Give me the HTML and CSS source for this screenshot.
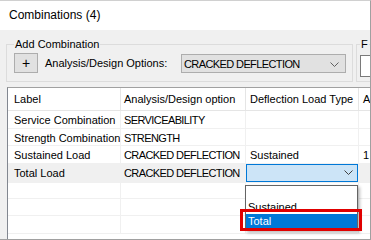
FILE: index.html
```html
<!DOCTYPE html>
<html>
<head>
<meta charset="utf-8">
<link rel="stylesheet" href="styles.css">
</head>
<body>
<div class="window">
  <div class="titlebar">Combinations (4)</div>
  <div class="panel">
    <div class="groups">
      <fieldset class="group group-add">
        <legend>Add Combination</legend>
        <div class="add-row">
          <button class="plus">+</button>
          <span class="opt-label">Analysis/Design Options:</span>
          <div class="combo">
            <span class="caps">CRACKED DEFLECTION</span>
            <svg class="chev" width="9" height="5" viewBox="0 0 9 5"><path d="M0.5 0.5 L4.5 4.5 L8.5 0.5" fill="none" stroke="#606060" stroke-width="1"/></svg>
          </div>
        </div>
      </fieldset>
      <fieldset class="group group-f">
        <legend>F</legend>
        <div class="textbox"></div>
      </fieldset>
    </div>
    <div class="grid">
      <div class="row head">
        <div class="cell">Label</div>
        <div class="cell">Analysis/Design option</div>
        <div class="cell">Deflection Load Type</div>
        <div class="cell">A</div>
      </div>
      <div class="row">
        <div class="cell">Service Combination</div>
        <div class="cell caps">SERVICEABILITY</div>
        <div class="cell"></div>
        <div class="cell"></div>
      </div>
      <div class="row">
        <div class="cell">Strength Combination</div>
        <div class="cell caps">STRENGTH</div>
        <div class="cell"></div>
        <div class="cell"></div>
      </div>
      <div class="row">
        <div class="cell">Sustained Load</div>
        <div class="cell caps">CRACKED DEFLECTION</div>
        <div class="cell">Sustained</div>
        <div class="cell">1</div>
      </div>
      <div class="row current">
        <div class="cell">Total Load</div>
        <div class="cell caps">CRACKED DEFLECTION</div>
        <div class="cell edit">
          <div class="cell-combo">
            <svg class="chev" width="9" height="5" viewBox="0 0 9 5"><path d="M0.5 0.5 L4.5 4.5 L8.5 0.5" fill="none" stroke="#404040" stroke-width="1"/></svg>
          </div>
          <div class="dropdown">
            <div class="item"></div>
            <div class="item">Sustained</div>
            <div class="item sel">Total</div>
          </div>
          <div class="mark"></div>
        </div>
        <div class="cell"></div>
      </div>
      <div class="row"><div class="cell"></div><div class="cell"></div><div class="cell"></div><div class="cell"></div></div>
      <div class="row"><div class="cell"></div><div class="cell"></div><div class="cell"></div><div class="cell"></div></div>
      <div class="row"><div class="cell"></div><div class="cell"></div><div class="cell"></div><div class="cell"></div></div>
    </div>
  </div>
</div>
</body>
</html>
```

FILE: styles.css
```css
html, body {
  margin: 0;
  padding: 0;
  background: #ffffff;
}
body {
  font-family: "Liberation Sans", Arial, sans-serif;
  font-size: 11px;
  color: #000;
}
.caps {
  letter-spacing: -0.6px;
}
.window {
  width: 370px;
  height: 238px;
  border-top: 1px solid #d0d0d0;
  border-right: 1px solid #a0a0a0;
  border-bottom: 1px solid #a0a0a0;
  overflow: hidden;
  display: flex;
  flex-direction: column;
  background: #f0f0f0;
}
.titlebar {
  height: 29px;
  background: #fff;
  padding-left: 9px;
  font-size: 12px;
  line-height: 29px;
  flex: none;
}
.panel {
  flex: 1;
  display: flex;
  flex-direction: column;
  min-height: 0;
}
.groups {
  display: flex;
  gap: 3px;
  padding: 7px 0 0 6px;
  flex: none;
}
.group {
  margin: 0;
  border: 1px solid #dcdcdc;
  min-width: 0;
  flex: none;
}
.group legend {
  padding: 0 1px;
  line-height: 14px;
  height: 14px;
}
.group-add {
  width: 332px;
  padding: 2px 6px 8px 7px;
}
.add-row {
  display: flex;
  align-items: flex-start;
  height: 20px;
}
.plus {
  width: 24px;
  height: 20px;
  margin: 0;
  padding: 0;
  border: 1px solid #adadad;
  background: #e1e1e1;
  font-family: "Liberation Sans", Arial, sans-serif;
  font-size: 14px;
  line-height: 16px;
  color: #000;
}
.opt-label {
  margin-left: 7px;
  line-height: 20px;
}
.combo {
  margin-left: auto;
  margin-top: 1px;
  height: 17px;
  border: 1px solid #adadad;
  background: #e1e1e1;
  display: flex;
  align-items: center;
  justify-content: space-between;
  padding: 0 6px 0 2px;
  box-sizing: content-box;
  width: 155px;
}
.combo .chev { margin-top: 1px; }
.group-f {
  width: 100px;
  padding: 2px 0 0 3px;
}
.textbox {
  width: 100px;
  height: 20px;
  border: 1px solid #7a7a7a;
  background: #fff;
  margin-top: 2px;
}
.grid {
  margin: 5px 0 0 7px;
  flex: 1;
  background: #fff;
  border-top: 1px solid #a0a0a0;
  border-left: 1px solid #828790;
  position: relative;
}
.row {
  display: grid;
  grid-template-columns: 113px 125px 113px 1fr;
  height: 17.5px;
}
.row.head {
  height: 23px;
}
.cell {
  border-right: 1px solid #f0f0f0;
  border-bottom: 1px solid #f0f0f0;
  padding-left: 6px;
  padding-top: 1px;
  line-height: 17px;
  white-space: nowrap;
  overflow: hidden;
  position: relative;
}
.row.head .cell {
  padding-top: 0;
  line-height: 22px;
  border-right-color: #e5e5e5;
  border-bottom-color: #e5e5e5;
}
.row .cell:nth-child(2) { padding-left: 3px; }
.row .cell:nth-child(3) { padding-left: 4px; }
.row .cell:nth-child(4) { padding-left: 4px; border-right: none; }
.row.current .cell { background: #f0f0f0; }
.row.current .cell.edit {
  background: #fff;
  overflow: visible;
  padding: 0;
}
.cell-combo {
  height: 16px;
  border: 1px solid #0078d7;
  background: #cce4f7;
  display: flex;
  align-items: center;
  justify-content: flex-end;
  padding-right: 4px;
}
.dropdown {
  position: absolute;
  left: -1px;
  top: 21px;
  width: 111px;
  height: 44px;
  border: 1px solid #646464;
  background: #fff;
  box-shadow: 2px 2px 3px rgba(0,0,0,0.25);
  z-index: 2;
}
.item {
  height: 14px;
  line-height: 14px;
  padding-left: 2px;
}
.item.sel {
  background: #0078d7;
  color: #fff;
  height: 15px;
  line-height: 15px;
}
.mark {
  position: absolute;
  left: -6px;
  top: 45px;
  width: 116px;
  height: 16px;
  border: 3px solid #e00000;
  z-index: 3;
}
```
